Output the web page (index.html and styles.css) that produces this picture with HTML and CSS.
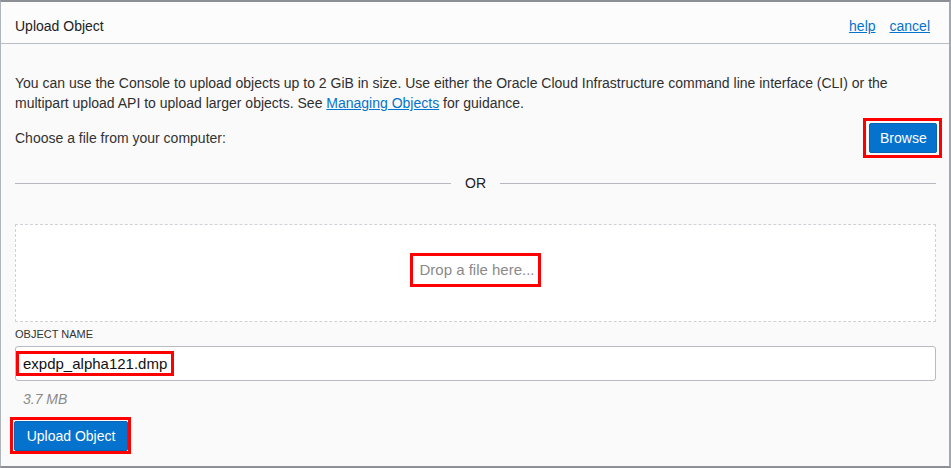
FILE: index.html
```html
<!DOCTYPE html>
<html>
<head>
<meta charset="utf-8">
<link rel="stylesheet" href="styles.css">
</head>
<body>
<div class="frame">
  <div class="header">
    <div class="title">Upload Object</div>
    <div class="links"><a href="#">help</a><a href="#">cancel</a></div>
  </div>
  <div class="body">
    <p class="intro">You can use the Console to upload objects up to 2 GiB in size. Use either the Oracle Cloud Infrastructure command line interface (CLI) or the multipart upload API to upload larger objects. See <a href="#">Managing Objects</a> for guidance.</p>
    <div class="choose">
      <span>Choose a file from your computer:</span>
      <span class="mark mark-browse"><button class="btn browse">Browse</button></span>
    </div>
    <div class="or"><span class="line"></span><span class="ortext">OR</span><span class="line"></span></div>
    <div class="drop"><span class="droptext">Drop a file here...</span></div>
    <div class="label">OBJECT NAME</div>
    <div class="input"><span class="val">expdp_alpha121.dmp</span></div>
    <div class="size">3.7 MB</div>
    <span class="mark mark-upload"><button class="btn upload">Upload Object</button></span>
  </div>
</div>
</body>
</html>
```

FILE: styles.css
```css
html, body { margin: 0; padding: 0; }
body {
  font-family: "Liberation Sans", Arial, sans-serif;
  font-size: 14px;
  color: #333;
  width: 951px;
  height: 468px;
  overflow: hidden;
  background: #fff;
}
.frame {
  box-sizing: border-box;
  width: 951px;
  height: 468px;
  border: 1px solid #b0b4bb;
  border-top: 2px solid #8c9096;
  border-right: 2px solid #a3a7ae;
  border-bottom: 2px solid #8c9096;
  background: #fafafa;
  display: flex;
  flex-direction: column;
}
.header {
  box-sizing: border-box;
  height: 42px;
  flex: none;
  border-bottom: 1px solid #b9bdc4;
  background: #fcfcfc;
  display: flex;
  align-items: center;
  justify-content: space-between;
  padding: 6px 19px 0 14px;
}
.title { color: #222; }
.links { display: flex; gap: 14px; }
a { color: #0572ce; text-decoration: underline; }
.body {
  padding: 29px 13px 0 14px;
  display: flex;
  flex-direction: column;
  align-items: stretch;
}
.intro { margin: 0; line-height: 20px; color: #2f2f2f; }
.choose {
  margin-top: 10px;
  display: flex;
  align-items: center;
  justify-content: space-between;
  height: 30px;
}
.mark {
  display: inline-flex;
  border: 3px solid #f00;
}
.mark-browse {
  padding: 2px 2px 2px 3px;
  margin-right: -6px;
}
.mark-upload {
  align-self: flex-start;
  margin-top: 9px;
  margin-left: -5px;
  padding: 1px 0 0 1px;
}
.btn {
  font-family: "Liberation Sans", Arial, sans-serif;
  font-size: 14px;
  color: #fff;
  background: #0572ce;
  border: 1px solid #0a64b4;
  border-radius: 2px;
  height: 30px;
  padding: 0 10px;
  cursor: pointer;
}
.browse { width: 68px; }
.upload { width: 114px; height: 30px; }
.or {
  margin-top: 20px;
  height: 20px;
  display: flex;
  align-items: center;
  gap: 14px;
}
.or .line { flex: 1; height: 1px; background: #b8b8c0; }
.ortext { color: #222; }
.drop {
  margin-top: 31px;
  height: 96px;
  border: 1px dashed #cfd1d6;
  background: #fff;
  display: flex;
  align-items: center;
  justify-content: center;
}
.droptext {
  font-size: 15px;
  color: #8a8a8a;
  padding: 5px 3px 5px 6px;
  border: 3px solid #f00;
  margin-top: -7px;
  line-height: 18px;
}
.label {
  margin-top: 5px;
  font-size: 11px;
  line-height: 14px;
  color: #333;
}
.input {
  margin-top: 5px;
  height: 33px;
  border: 1px solid #b8bbc1;
  border-radius: 3px;
  background: #fff;
  display: flex;
  align-items: center;
  padding-left: 0;
}
.val {
  font-size: 15px;
  color: #111;
  padding: 0 4px 0 4px;
  line-height: 19px;
  border: 3px solid #f00;
}
.size {
  margin-top: 9px;
  padding-left: 8px;
  color: #8a8a8a;
  font-style: italic;
  line-height: 18px;
}
```
